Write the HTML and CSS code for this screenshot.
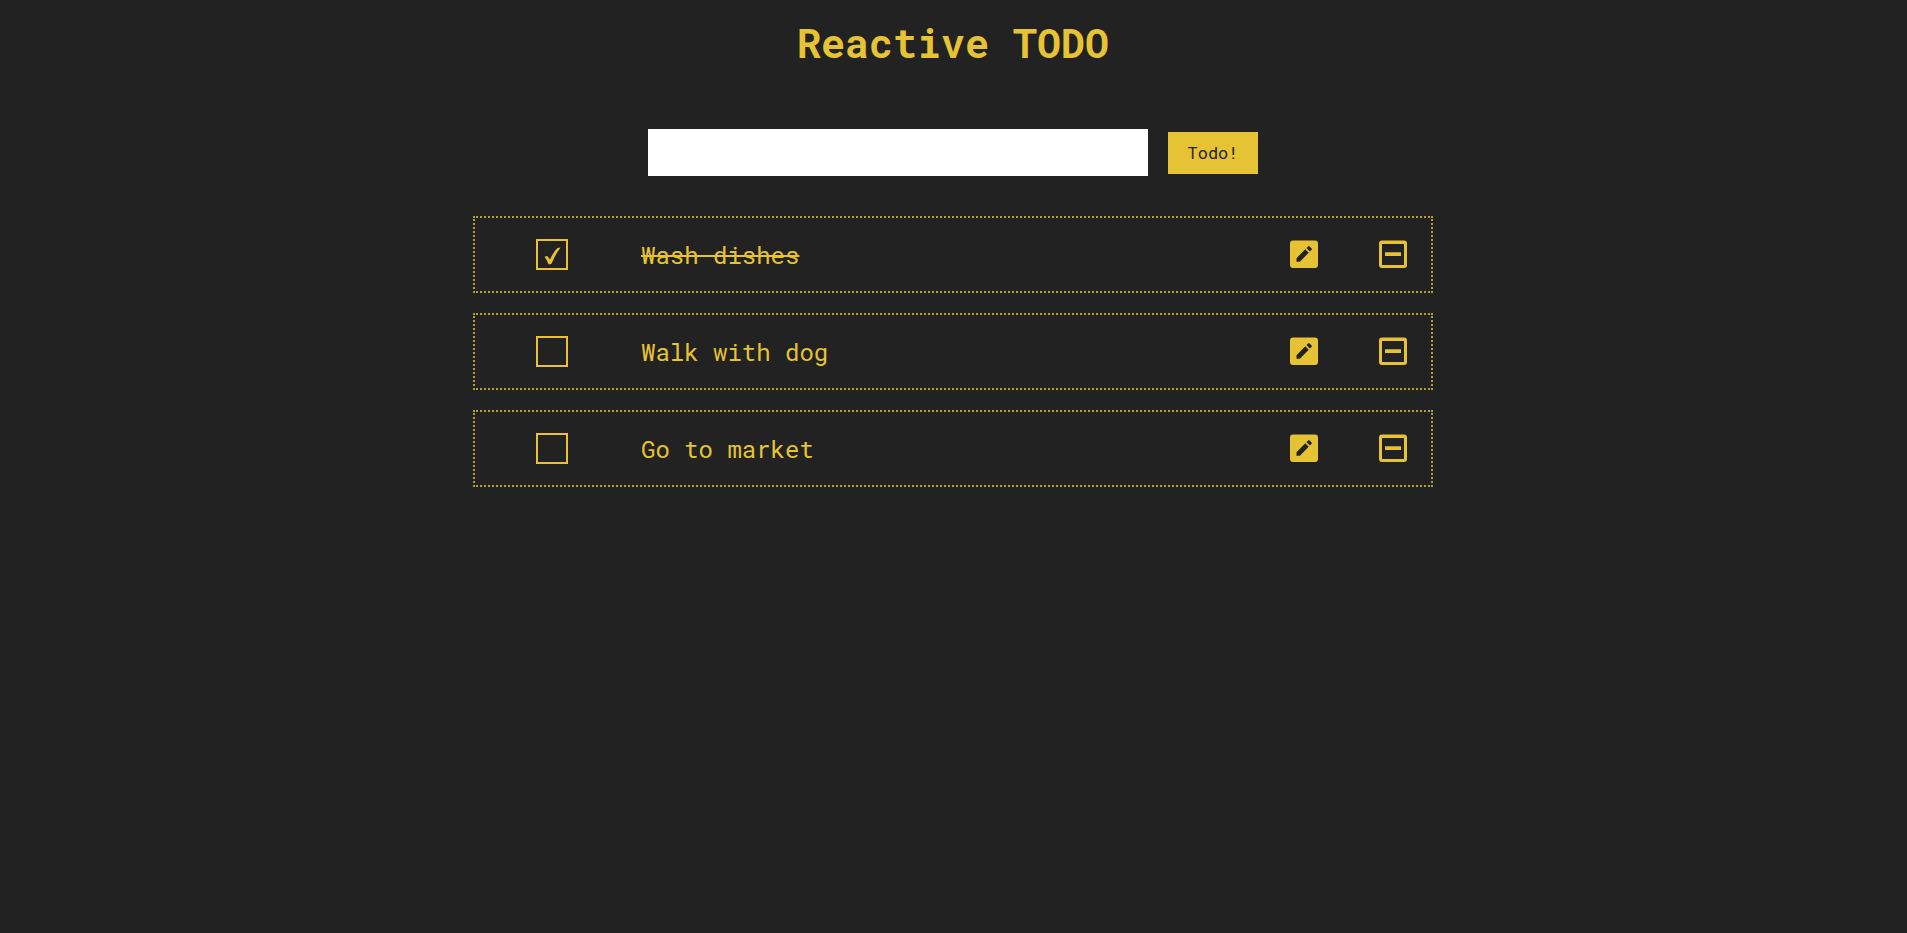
FILE: index.html
```html
<!DOCTYPE html>
<html lang="en">
<head>
<meta charset="utf-8">
<title>Reactive TODO</title>
<link rel="stylesheet" href="styles.css">
</head>
<body>
<svg class="sprite" aria-hidden="true">
  <symbol id="edit" viewBox="0 0 28 28">
    <path fill-rule="evenodd" d="M3 .5H25Q28 .5 28 3.500V25Q28 28 25 28H3Q0 28 0 25V3.500Q0 .5 3 .5ZM6.500 18.200V21.700H9.900L18.700 12.700L15.300 9.200ZM16.500 8L19.900 11.500L21.600 9.800Q22.200 9.100 21.600 8.400L19.600 6.400Q18.900 5.800 18.200 6.400Z"/>
  </symbol>
  <symbol id="remove" viewBox="0 0 28 28">
    <path fill-rule="evenodd" d="M3 .5H25Q28 .5 28 3.500V25Q28 28 25 28H3Q0 28 0 25V3.500Q0 .5 3 .5ZM3 4V25H25V4ZM6 12.300H22V16H6Z"/>
  </symbol>
  <symbol id="tick" viewBox="0 0 32 31">
    <path d="M8.500 17.800L11.300 17L14 20.500Q17.500 12.500 21.500 9L24.600 8.500Q19.500 15 15.800 24.200L14.500 25.200H12.500Q11 21 8.500 17.800Z"/>
  </symbol>
</svg>
<main class="app">
  <h1 class="title">Reactive TODO</h1>
  <form class="new-todo">
    <input class="new-todo-text" type="text" aria-label="New todo">
    <button class="new-todo-add" type="button">Todo!</button>
  </form>
  <ul class="todos">
    <li class="todo">
      <span class="check"><input class="check-box" type="checkbox" id="todo-1" checked><svg class="check-tick" aria-hidden="true"><use href="#tick"/></svg></span>
      <label class="todo-text" for="todo-1">Wash dishes</label>
      <button class="action" type="button" aria-label="Edit"><svg class="icon"><use href="#edit"/></svg></button>
      <button class="action" type="button" aria-label="Remove"><svg class="icon"><use href="#remove"/></svg></button>
    </li>
    <li class="todo">
      <span class="check"><input class="check-box" type="checkbox" id="todo-2"><svg class="check-tick" aria-hidden="true"><use href="#tick"/></svg></span>
      <label class="todo-text" for="todo-2">Walk with dog</label>
      <button class="action" type="button" aria-label="Edit"><svg class="icon"><use href="#edit"/></svg></button>
      <button class="action" type="button" aria-label="Remove"><svg class="icon"><use href="#remove"/></svg></button>
    </li>
    <li class="todo">
      <span class="check"><input class="check-box" type="checkbox" id="todo-3"><svg class="check-tick" aria-hidden="true"><use href="#tick"/></svg></span>
      <label class="todo-text" for="todo-3">Go to market</label>
      <button class="action" type="button" aria-label="Edit"><svg class="icon"><use href="#edit"/></svg></button>
      <button class="action" type="button" aria-label="Remove"><svg class="icon"><use href="#remove"/></svg></button>
    </li>
  </ul>
</main>
</body>
</html>
```
FILE: styles.css
```css
* {
  box-sizing: border-box;
}

body {
  margin: 0;
  padding-right: 1px;
  background: #222;
  color: #e6c235;
  font-family: "Roboto Mono", "DejaVu Sans Mono", "Liberation Mono", monospace;
}

.sprite {
  display: none;
}

.app {
  max-width: 960px;
  margin: 0 auto;
  padding-top: 16px;
}

.title {
  margin: 0 0 60px;
  font-size: 40px;
  line-height: 53px;
  text-align: center;
}

.new-todo {
  display: flex;
  align-items: center;
  justify-content: center;
  gap: 20px;
  margin-bottom: 40px;
}

.new-todo-text {
  flex: 0 1 500px;
  min-width: 0;
  padding: 12px;
  border: 0;
  border-radius: 0;
  background: #fff;
  color: #222;
  font: 16px/23px "Roboto Mono", "DejaVu Sans Mono", monospace;
}

.new-todo-add {
  width: 90px;
  padding: 10px 0;
  border: 0;
  background: #e6c235;
  color: #222;
  font: 17px/22px "Roboto Mono", "DejaVu Sans Mono", monospace;
}

.todos {
  display: grid;
  gap: 20px;
  margin: 0;
  padding: 0;
  list-style: none;
}

.todo {
  display: flex;
  align-items: center;
  padding: 20px 24px 20px 61px;
  border: 2px dotted #b59f33;
}

.check {
  display: grid;
  margin-right: 73px;
}

.check-box,
.check-tick {
  grid-area: 1 / 1;
  width: 32px;
  height: 31px;
  margin: 0;
}

.check-box {
  appearance: none;
  border: 2px solid #ebc034;
}

.check-tick {
  visibility: hidden;
  fill: #e6c235;
  pointer-events: none;
}

.check-box:checked + .check-tick {
  visibility: visible;
}

.todo-text {
  flex: 1;
  padding-top: 2px;
  font-size: 24px;
  line-height: 31px;
}

.check:has(:checked) + .todo-text {
  text-decoration: line-through 2px;
}

.action {
  padding: 0 0 1px;
  border: 0;
  background: none;
  color: inherit;
}

.action + .action {
  margin-left: 61px;
}

.icon {
  display: block;
  width: 28px;
  height: 28px;
  fill: currentColor;
}
```
